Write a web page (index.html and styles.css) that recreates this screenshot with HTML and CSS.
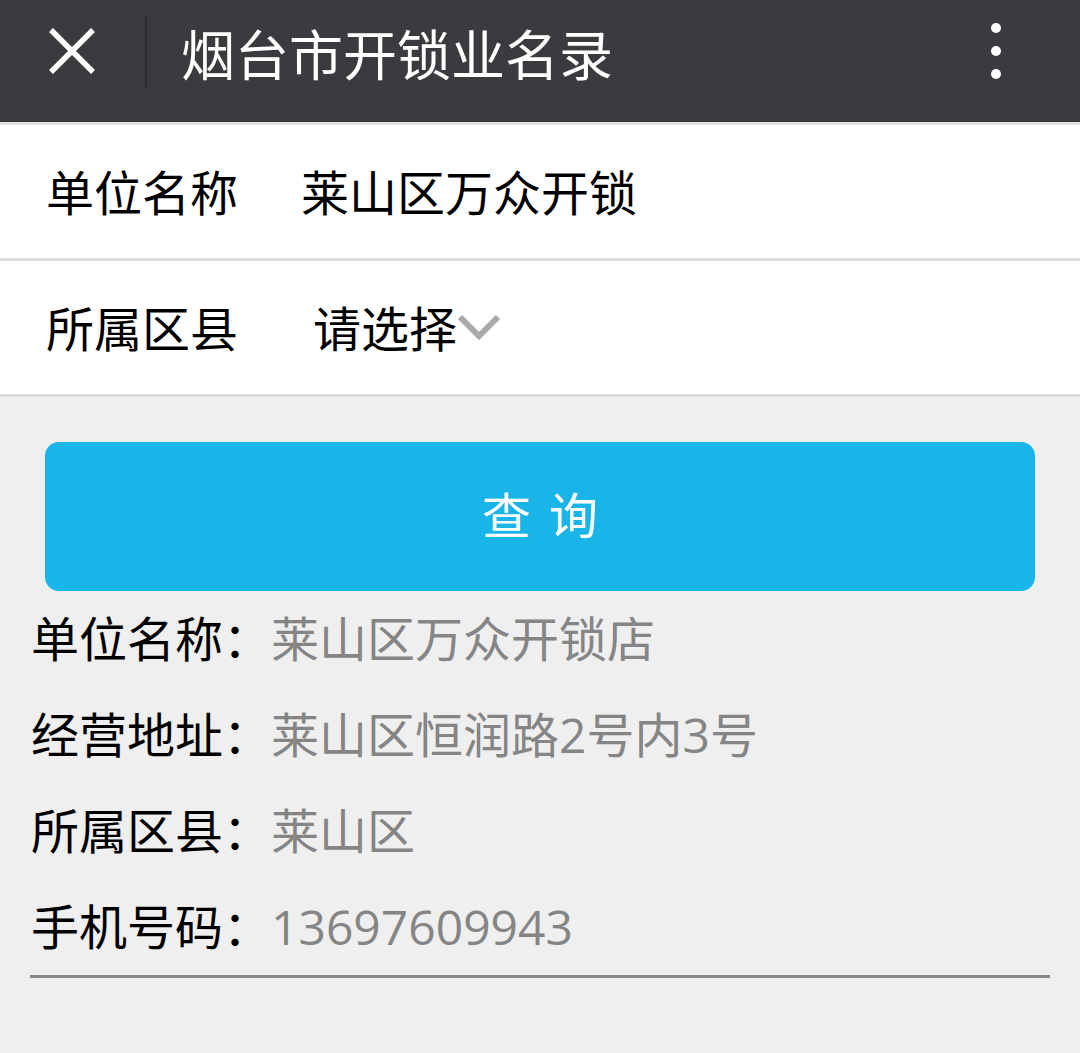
FILE: index.html
```html
<!DOCTYPE html>
<html lang="zh-CN">
<head>
    <meta charset="UTF-8">
    <meta name="viewport" content="width=device-width, initial-scale=1">
    <title>烟台市开锁业名录</title>
    <link rel="stylesheet" href="styles.css">
</head>
<body>
    <div class="top-bar">
        <div class="close-btn">
            <svg width="48" height="48" viewBox="0 0 48 48">
                <path d="M3 3 L45 45 M45 3 L3 45" stroke="#fff" stroke-width="5.5" fill="none"/>
            </svg>
        </div>
        <div class="divider"></div>
        <div class="title">烟台市开锁业名录</div>
        <div class="menu-btn">
            <span></span><span></span><span></span>
        </div>
    </div>

    <form class="search-form" id="searchForm">
        <div class="field">
            <label for="dwmc">单位名称</label>
            <input type="text" id="dwmc" value="莱山区万众开锁">
        </div>
        <div class="field">
            <label for="ssqx">所属区县</label>
            <div class="select-box">
                <span>请选择</span>
                <svg width="44" height="28" viewBox="0 0 44 28">
                    <path d="M3 4 L22 23 L41 4" stroke="#aaa" stroke-width="6" fill="none"/>
                </svg>
            </div>
        </div>
    </form>

    <button class="query-btn" type="button">查询</button>

    <div class="result">
        <div class="result-row"><span class="k">单位名称：</span><span class="v">莱山区万众开锁店</span></div>
        <div class="result-row"><span class="k">经营地址：</span><span class="v">莱山区恒润路2号内3号</span></div>
        <div class="result-row"><span class="k">所属区县：</span><span class="v">莱山区</span></div>
        <div class="result-row"><span class="k">手机号码：</span><span class="v">13697609943</span></div>
    </div>
</body>
</html>
```

FILE: styles.css
```css
body {
    margin: 0;
    padding: 0;
    background-color: #efefef;
    font-family: "Open Sans", "Noto Sans CJK SC", sans-serif;
}
.top-bar {
    height: 122px;
    background-color: #3a3b3f;
    display: flex;
    align-items: center;
    border-bottom: 3px solid #e2e2e2;
}
.close-btn {
    width: 145px;
    display: flex;
    justify-content: center;
}
.close-btn svg {
    margin-left: -2px;
    margin-top: -20px;
}
.divider {
    width: 2px;
    height: 72px;
    background-color: #2b2c2f;
    margin-top: -19px;
}
.title {
    flex: 1;
    color: #fff;
    font-size: 54px;
    padding-left: 34px;
    margin-top: -18px;
}
.menu-btn {
    width: 168px;
    display: flex;
    flex-direction: column;
    align-items: center;
    gap: 13px;
    margin-top: -20px;
}
.menu-btn span {
    width: 10px;
    height: 10px;
    border-radius: 50%;
    background-color: #fff;
}
.search-form {
    margin: 0;
}
.field {
    height: 133px;
    background-color: #fff;
    border-bottom: 3px solid #dcdcdc;
    display: flex;
    align-items: center;
    padding-left: 46px;
}
.field label {
    width: 255px;
    font-size: 48px;
    color: #000;
    margin-top: -4px;
}
.field input {
    border: none;
    outline: none;
    font-family: inherit;
    font-size: 48px;
    color: #000;
    padding: 0;
    width: 600px;
    background: transparent;
    margin-top: -4px;
}
.select-box {
    display: flex;
    align-items: center;
    font-size: 48px;
    padding-left: 12px;
    margin-top: -4px;
}
.select-box svg {
    margin-left: 0;
    margin-top: 2px;
}
.query-btn {
    display: block;
    width: 990px;
    height: 149px;
    margin: 45px 45px 0;
    border: none;
    border-radius: 14px;
    background-color: #19b4e8;
    color: #fff;
    font-family: inherit;
    font-size: 49px;
    letter-spacing: 18px;
    padding: 0 0 8px 18px;
}
.result {
    margin: 0 30px;
    border-bottom: 3px solid #888;
}
.result-row {
    height: 96px;
    line-height: 96px;
    font-size: 48px;
    padding-left: 1px;
}
.result-row .k {
    color: #000;
}
.result-row .v {
    color: #858585;
}
```
